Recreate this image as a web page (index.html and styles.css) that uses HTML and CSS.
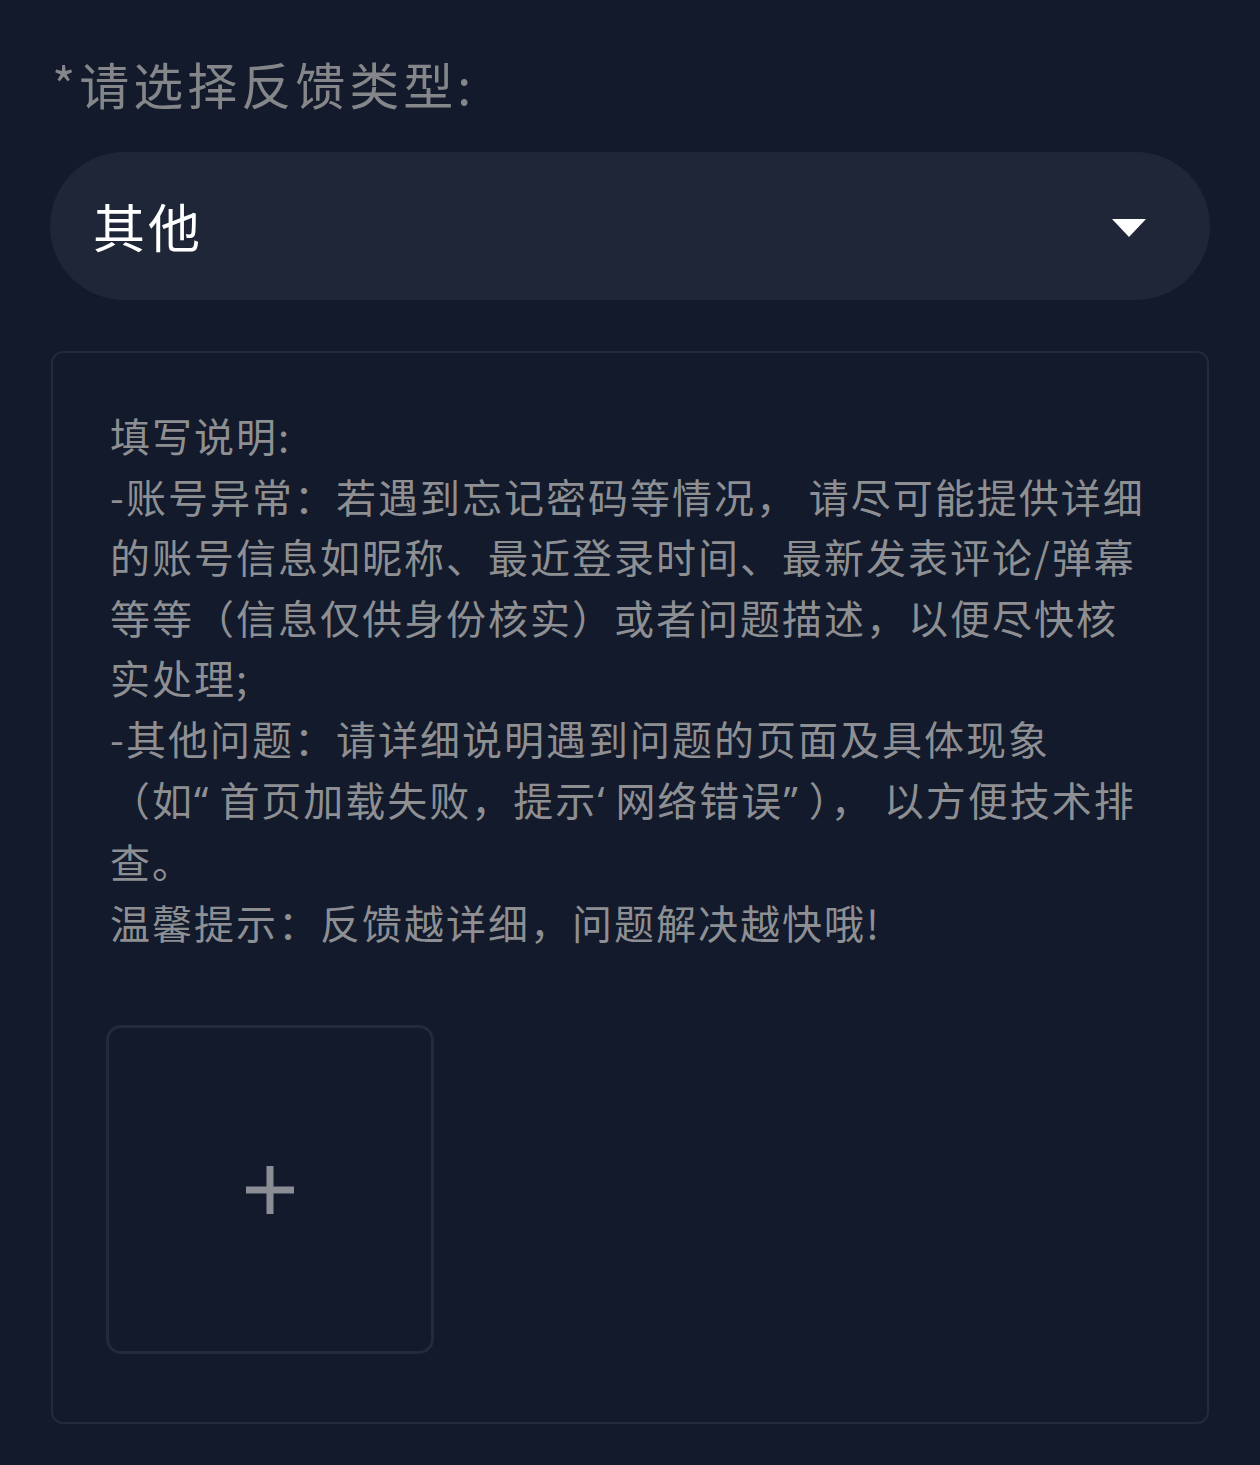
FILE: index.html
```html
<!DOCTYPE html>
<html lang="zh-CN">
<head>
<meta charset="utf-8">
<title>反馈</title>
<link rel="stylesheet" href="styles.css">
</head>
<body>
<div class="page">
  <div class="label">*请选择反馈类型:</div>
  <div class="select">
    <span class="select-value">其他</span>
    <svg class="caret" width="34" height="18" viewBox="0 0 34 18"><polygon points="0,0 34,0 17,18" fill="#ffffff"/></svg>
  </div>
  <div class="panel">
    <div class="hint">填写说明:<br>-账号异常：若遇到忘记密码等情况， 请尽可能提供详细<br>的账号信息如昵称、最近登录时间、最新发表评论/弹幕<br>等等（信息仅供身份核实）或者问题描述，以便尽快核<br>实处理;<br>-其他问题：请详细说明遇到问题的页面及具体现象<br>（如<span class="q">“</span>首页加载失败，提示<span class="q">‘</span>网络错误<span class="q">”</span>）， 以方便技术排<br>查。<br>温馨提示：反馈越详细，问题解决越快哦!</div>
    <div class="upload">
      <svg width="48" height="48" viewBox="0 0 48 48"><rect x="20.5" y="0" width="7" height="48" fill="#8a8d93"/><rect x="0" y="20.5" width="48" height="7" fill="#8a8d93"/></svg>
    </div>
  </div>
</div>
</body>
</html>
```
FILE: styles.css
```css
html, body {
  margin: 0;
  padding: 0;
  background: #121a2b;
}
body {
  font-family: "Noto Sans CJK SC", "Noto Sans", sans-serif;
  width: 1260px;
  height: 1465px;
  overflow: hidden;
}
.page {
  padding: 48px 50px 0 50px;
}
.label {
  font-size: 50px;
  line-height: 70px;
  letter-spacing: 4px;
  color: #858689;
  padding-left: 2px;
}
.select {
  margin-top: 34px;
  height: 148px;
  border-radius: 74px;
  background: #1f2637;
  display: flex;
  align-items: center;
  justify-content: space-between;
  padding: 0 64px 0 43px;
}
.select-value {
  font-size: 52px;
  letter-spacing: 3px;
  color: #ffffff;
  line-height: 1;
}
.caret {
  display: block;
  margin-top: 4px;
}
.panel {
  margin-top: 51px;
  margin-left: 1px;
  margin-right: 1px;
  border: 2px solid #232a3b;
  border-radius: 12px;
  padding: 52px 40px 68px 57px;
}
.hint {
  font-size: 40px;
  letter-spacing: 2px;
  line-height: 60.6px;
  color: #8e8f93;
  white-space: nowrap;
}
.q {
  font-family: "Noto Sans", sans-serif;
  letter-spacing: 11px;
}
.upload {
  margin-top: 73px;
  margin-left: -4px;
  width: 322px;
  height: 323px;
  border: 3px solid #232a3b;
  border-radius: 15px;
  display: flex;
  align-items: center;
  justify-content: center;
}
.upload svg {
  display: block;
}
```
